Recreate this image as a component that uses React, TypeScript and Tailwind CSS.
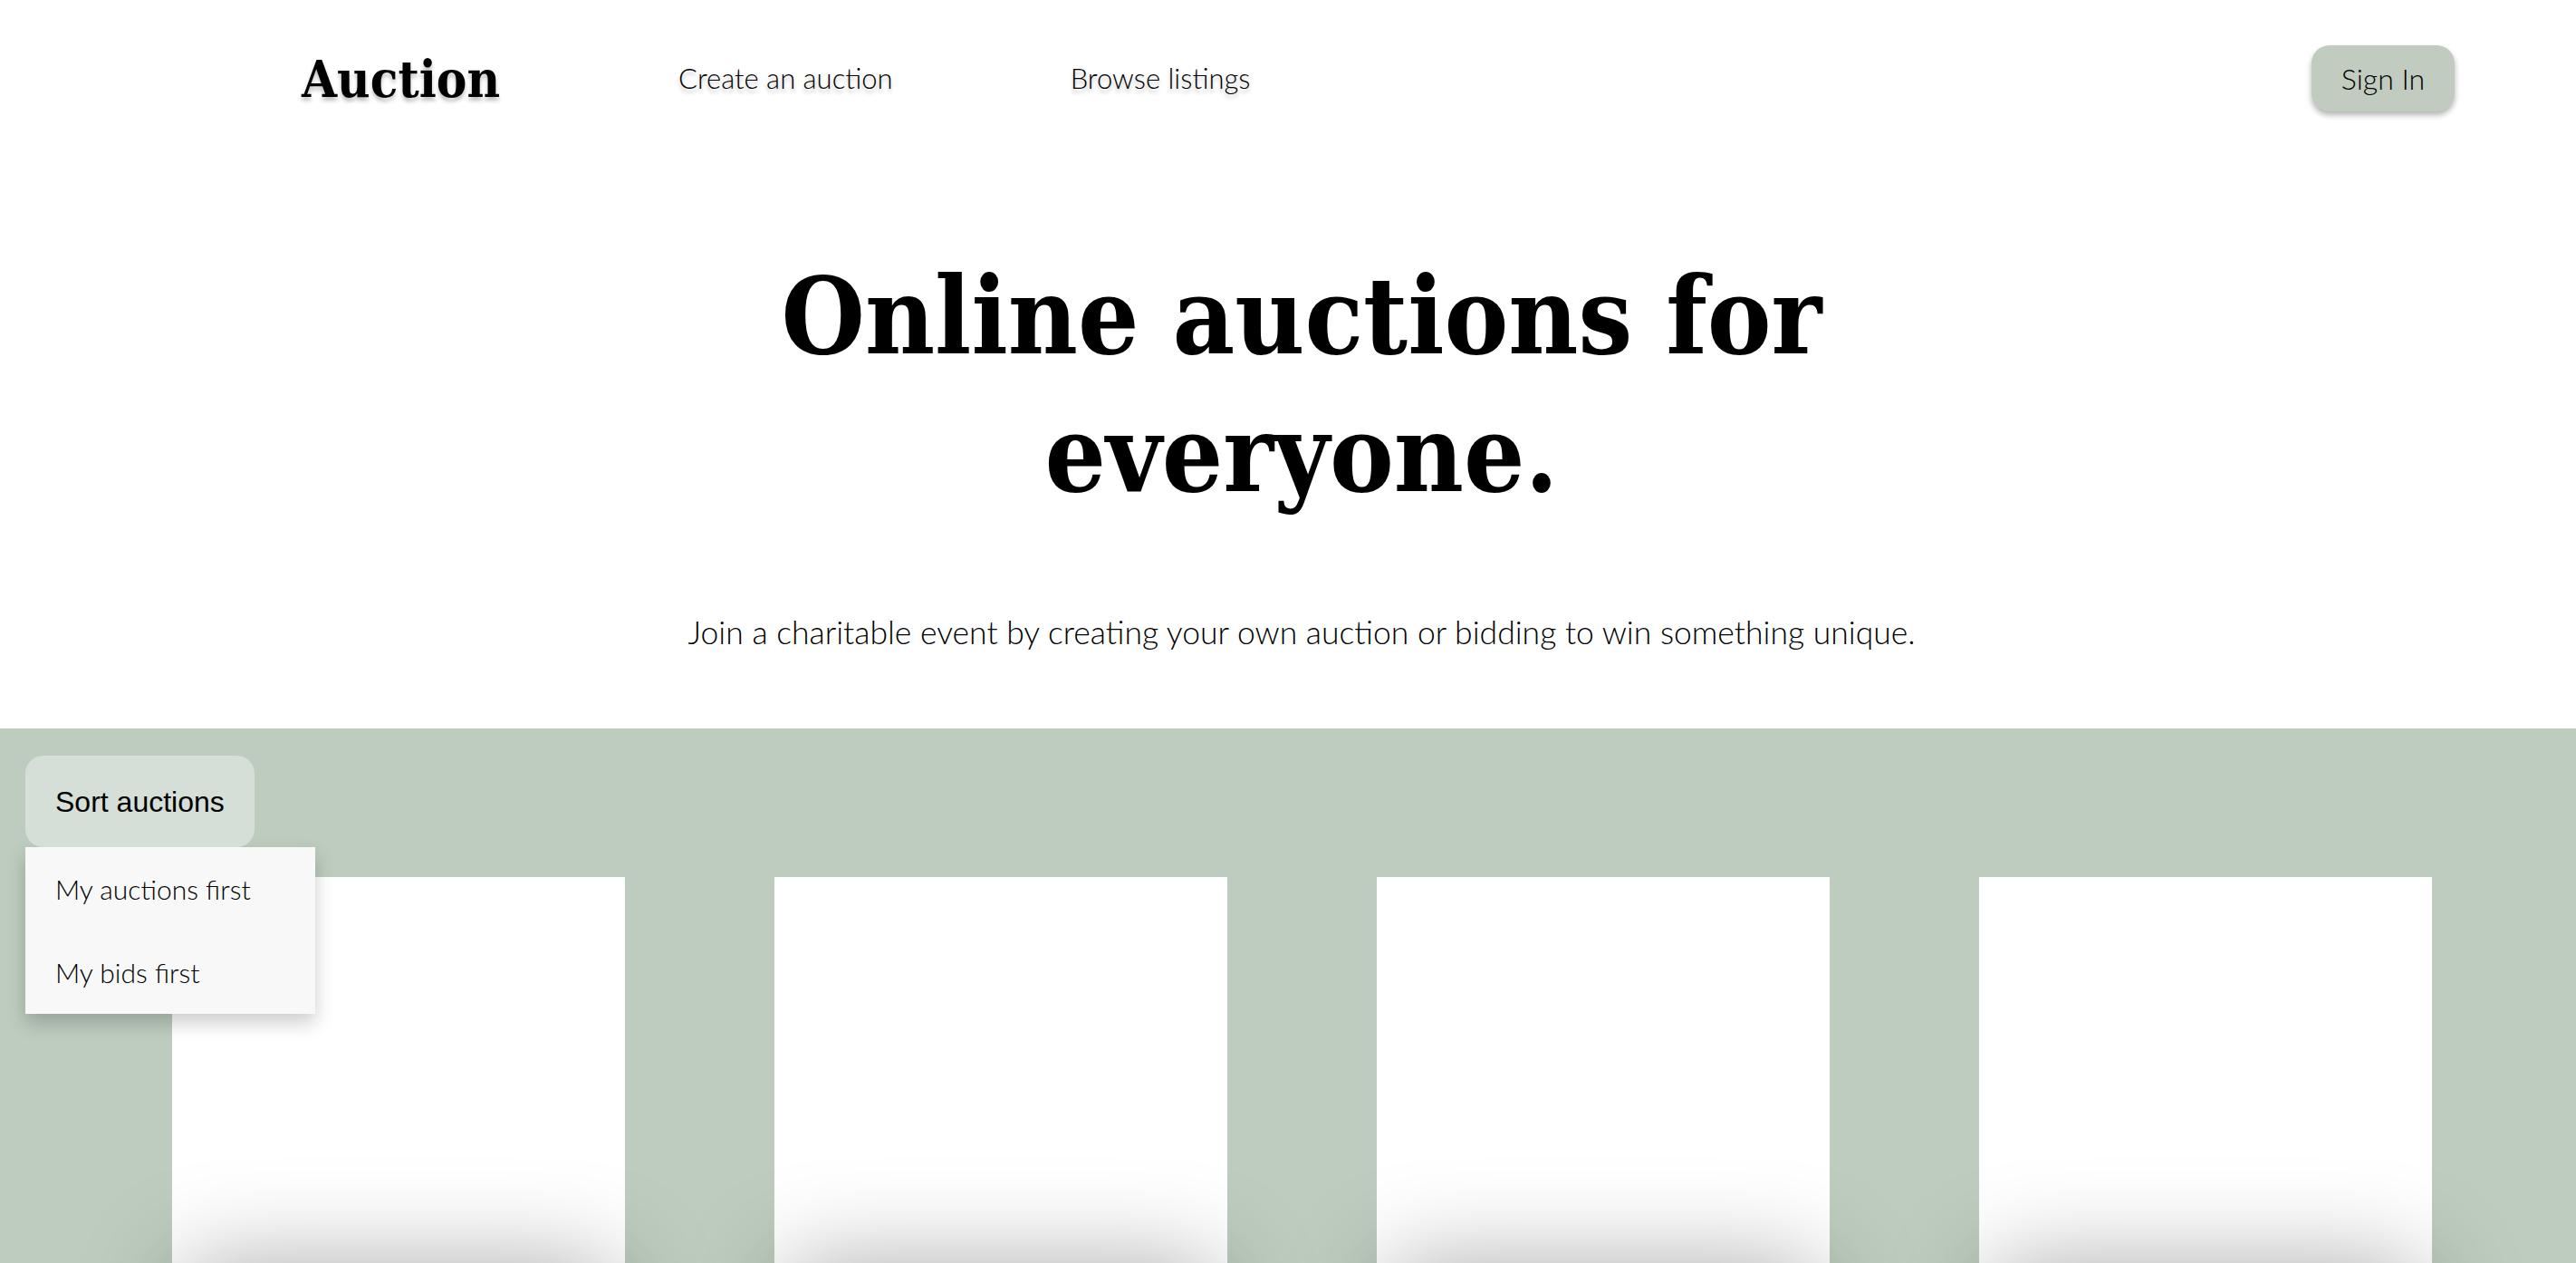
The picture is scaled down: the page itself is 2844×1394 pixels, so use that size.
const serif = "font-['DejaVu_Serif_Condensed','DejaVu_Serif',serif] [font-stretch:condensed] font-bold"
const light = "font-['Lato','Noto_Sans',sans-serif] font-light"

const cards = [0, 1, 2, 3]

export default function App() {
  return (
    <div className="h-[1394px] w-full overflow-hidden bg-white text-black">
      {/* Header */}
      <header className="flex items-center pl-[333px] pr-[134px] pt-[50px]">
        <a className={`${serif} text-[56px] leading-none [text-shadow:0_4px_4px_rgba(0,0,0,0.25)]`}>Auction</a>
        <nav className={`${light} ml-[197px] flex items-center gap-[196px] text-[31px] [text-shadow:0_4px_4px_rgba(0,0,0,0.25)]`}>
          <a>Create an auction</a>
          <a>Browse listings</a>
        </nav>
        <button
          className={`${light} ml-auto h-[73px] w-[158px] rounded-[20px] bg-[#c1cbbf] text-[32px] shadow-[0_4px_6px_rgba(0,0,0,0.3)]`}
        >
          Sign In
        </button>
      </header>

      {/* Hero */}
      <section className="flex flex-col items-center pl-[30px] pt-[150px] text-center">
        <h1 className={`${serif} text-[118px] leading-[152px]`}>
          Online auctions for
          <br />
          everyone.
        </h1>
        <p className={`${light} mt-[94px] text-[35.5px]`}>
          Join a charitable event by creating your own auction or bidding to win something unique.
        </p>
      </section>

      {/* Listings */}
      <section className="relative mt-[80px] h-[800px] bg-[#bdccbf]">
        <div className="relative z-20 pl-[28px] pt-[30px]">
          <button className="h-[101px] rounded-[20px] bg-[#d5dfd7] px-[33px] font-['Liberation_Sans',Arial,sans-serif] text-[32px]">
            Sort auctions
          </button>
          <div className={`${light} w-[320px] bg-[#f8f8f8] text-[30px] shadow-[0_10px_20px_rgba(0,0,0,0.2)]`}>
            <div className="px-[33px] py-[27px] leading-[38px]">My auctions first</div>
            <div className="px-[33px] py-[27px] leading-[38px]">My bids first</div>
          </div>
        </div>

        <div className="absolute left-0 top-[164px] flex gap-[165px] pl-[190px]">
          {cards.map((c) => (
            <div key={c} className="flex w-[500px] flex-col items-center">
              <div className="h-[500px] w-[500px] bg-white" />
              <div className="-mt-[60px] h-[300px] w-[480px] rounded-[24px] bg-white shadow-[0_-10px_110px_rgba(0,0,0,0.35)]" />
            </div>
          ))}
        </div>
      </section>
    </div>
  )
}
